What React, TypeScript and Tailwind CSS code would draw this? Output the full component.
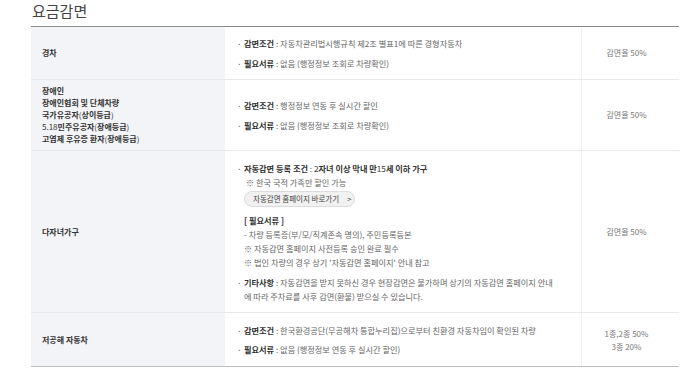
import type { ReactNode } from "react";

const font = {
  fontFamily: '"Noto Sans CJK KR", "Noto Sans", sans-serif',
};

function Item({ label, children }: { label: string; children: ReactNode }) {
  return (
    <div className="flex">
      <span className="w-[7px] shrink-0">·</span>
      <span>
        <b className="font-bold text-[#333]">{label}</b> : {children}
      </span>
    </div>
  );
}

function Row({
  title,
  h,
  body,
  rate,
  last,
}: {
  title: ReactNode;
  h: string;
  body: ReactNode;
  rate: ReactNode;
  last?: boolean;
}) {
  return (
    <div
      className={`grid grid-cols-[194px_356px_98px] ${h} ${
        last ? "border-b border-[#bdbdbd]" : "border-b border-[#e9e9e9]"
      }`}
    >
      <div className="flex items-center bg-[#f3f4f7] pl-[11px] text-[8px] font-bold text-[#333]">
        {title}
      </div>
      <div className="flex flex-col justify-center pl-[12px] text-[8.2px] text-[#666]">
        {body}
      </div>
      <div className="flex items-center justify-center border-l border-[#f0f0f0] pr-[8px] text-center text-[8px] text-[#777]">
        {rate}
      </div>
    </div>
  );
}

export default function App() {
  return (
    <div className="h-[387px] w-[700px] bg-white pl-[31px]" style={font}>
      <div className="h-[26px] pl-[1px] pt-[2px] text-[15px] leading-[18px] font-normal text-[#444]">요금감면</div>
      <div className="w-[648px] border-t border-[#8a8a8a]">
        <Row
          h="h-[53px]"
          title="경차"
          body={
            <div className="leading-[20px]">
              <Item label="감면조건">자동차관리법시행규칙 제2조 별표1에 따른 경형자동차</Item>
              <Item label="필요서류">없음 (행정정보 조회로 차량확인)</Item>
            </div>
          }
          rate="감면율 50%"
        />
        <Row
          h="h-[71px]"
          title={
            <div className="leading-[12px]">
              <div>장애인</div>
              <div>장애인협회 및 단체차량</div>
              <div>
                국가유공자<span className="font-normal">(</span>상이등급<span className="font-normal">)</span>
              </div>
              <div>
                <span className="font-normal">5.18</span>민주유공자<span className="font-normal">(</span>장애등급
                <span className="font-normal">)</span>
              </div>
              <div>
                고엽제 후유증 환자<span className="font-normal">(</span>장애등급<span className="font-normal">)</span>
              </div>
            </div>
          }
          body={
            <div className="leading-[20px]">
              <Item label="감면조건">행정정보 연동 후 실시간 할인</Item>
              <Item label="필요서류">없음 (행정정보 조회로 차량확인)</Item>
            </div>
          }
          rate="감면율 50%"
        />
        <Row
          h="h-[162px]"
          title="다자녀가구"
          body={
            <div className="leading-[14px]">
              <div className="flex">
                <span className="w-[7px] shrink-0">·</span>
                <span>
                  <b className="font-bold text-[#333]">자동감면 등록 조건</b> :{" "}
                  <span className="text-[#333]">
                    2<b className="font-bold">자녀 이상 막내 만</b>15<b className="font-bold">세 이하 가구</b>
                  </span>
                </span>
              </div>
              <div className="pl-[9px]">※ 한국 국적 가족만 할인 가능</div>
              <div className="pl-[7px] pt-[2px]">
                <span className="inline-flex h-[16px] w-[111px] items-center rounded-full border border-[#dcdcdc] bg-[#f1f1f1] pl-[8px] text-[7.5px] leading-none text-[#444]">
                  자동감면 홈페이지 바로가기
                  <span className="ml-[8px]">&gt;</span>
                </span>
              </div>
              <div className="mt-[6px] pl-[7px] font-bold text-[#333]">[ 필요서류 ]</div>
              <div className="pl-[7px]">- 차량 등록증(부/모/직계존속 명의), 주민등록등본</div>
              <div className="pl-[7px]">※ 자동감면 홈페이지 사전등록 승인 완료 필수</div>
              <div className="pl-[7px]">※ 법인 차량의 경우 상기 '자동감면 홈페이지' 안내 참고</div>
              <div className="mt-[6px] flex">
                <span className="w-[7px] shrink-0">·</span>
                <span>
                  <b className="font-bold text-[#333]">기타사항</b> : 자동감면을 받지 못하신 경우 현장감면은 불가하며 상기의 자동감면 홈페이지 안내
                  <br />
                  에 따라 주차료를 사후 감면(환불) 받으실 수 있습니다.
                </span>
              </div>
            </div>
          }
          rate="감면율 50%"
        />
        <Row
          h="h-[54px]"
          last
          title="저공해 자동차"
          body={
            <div className="leading-[19px]">
              <Item label="감면조건">한국환경공단(무공해차 통합누리집)으로부터 친환경 자동차임이 확인된 차량</Item>
              <Item label="필요서류">없음 (행정정보 연동 후 실시간 할인)</Item>
            </div>
          }
          rate={
            <div className="leading-[13px]">
              <div>1종,2종 50%</div>
              <div>3종 20%</div>
            </div>
          }
        />
      </div>
    </div>
  );
}
